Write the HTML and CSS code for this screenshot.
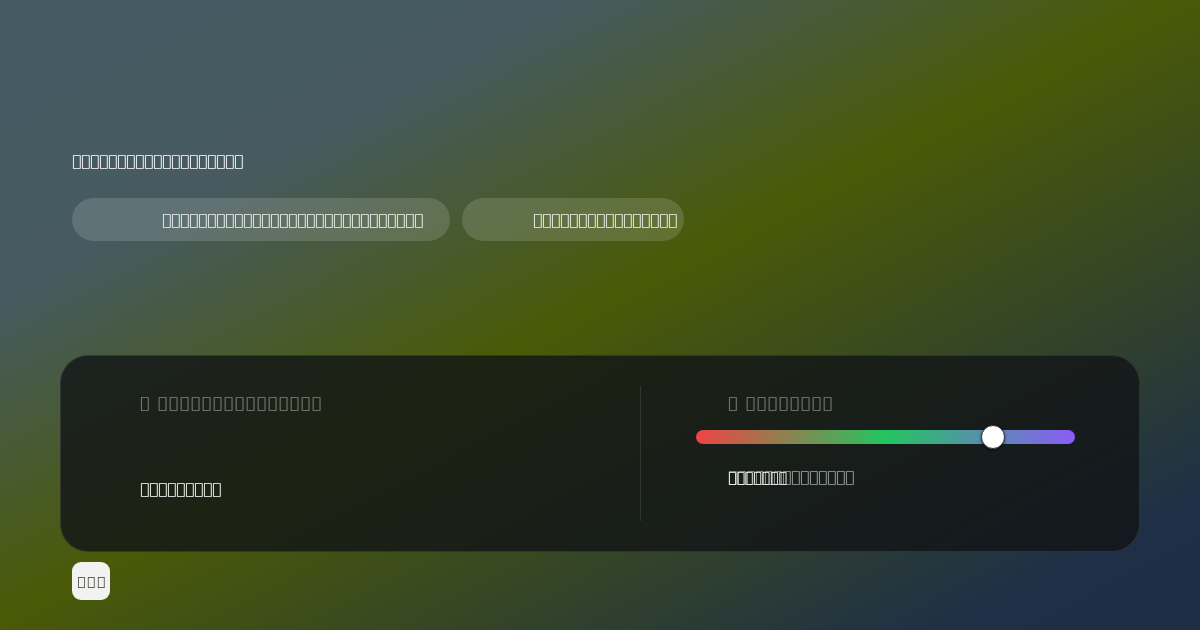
FILE: index.html
```html
<!DOCTYPE html>
<html>
<head>
    <meta charset="UTF-8">
    <meta name="viewport" content="width=device-width, initial-scale=1.0">
    <title>&#x100000;&#x100001;&#x100002;</title>
    <link rel="stylesheet" href="styles.css">
</head>
<body>
    <main class="page">
        <section class="intro">
            <p class="intro-title">&#x100010;&#x100011;&#x100012;&#x100013;&#x100014;&#x100015;&#x100016;&#x100017;&#x100018;&#x100019;&#x10001A;&#x10001B;&#x10001C;&#x10001D;&#x10001E;&#x10001F;&#x100020;&#x100021;&#x100022;</p>
            <div class="chips">
                <span class="chip chip-wide">&#x100030;&#x100031;&#x100032;&#x100033;&#x100034;&#x100035;&#x100036;&#x100037;&#x100038;&#x100039;&#x10003A;&#x10003B;&#x10003C;&#x10003D;&#x10003E;&#x10003F;&#x100040;&#x100041;&#x100042;&#x100043;&#x100044;&#x100045;&#x100046;&#x100047;&#x100048;&#x100049;&#x10004A;&#x10004B;&#x10004C;</span>
                <span class="chip chip-narrow">&#x100050;&#x100051;&#x100052;&#x100053;&#x100054;&#x100055;&#x100056;&#x100057;&#x100058;&#x100059;&#x10005A;&#x10005B;&#x10005C;&#x10005D;&#x10005E;&#x10005F;</span>
            </div>
        </section>

        <section class="card">
            <div class="col col-left">
                <p class="col-label">&#x100060; &#x100061;&#x100062;&#x100063;&#x100064;&#x100065;&#x100066;&#x100067;&#x100068;&#x100069;&#x10006A;&#x10006B;&#x10006C;&#x10006D;&#x10006E;&#x10006F;</p>
                <p class="col-value">&#x100070;&#x100071;&#x100072;&#x100073;&#x100074;&#x100075;&#x100076;&#x100077;&#x100078;</p>
            </div>
            <div class="divider"></div>
            <div class="col col-right">
                <p class="col-label">&#x100080; &#x100081;&#x100082;&#x100083;&#x100084;&#x100085;&#x100086;&#x100087;&#x100088;</p>
                <div class="slider">
                    <div class="slider-track"></div>
                    <div class="slider-thumb" style="left: 78.4%"></div>
                </div>
                <div class="slider-caption">
                    <span class="caption-hint">&#x100090;&#x100091;&#x100092;&#x100093;&#x100094;&#x100095;&#x100096;&#x100097;&#x100098;&#x100099;&#x10009A;&#x10009B;&#x10009C;&#x10009D;</span>
                    <span class="caption-value">&#x1000A0;&#x1000A1;&#x1000A2;&#x1000A3;&#x1000A4;&#x1000A5;&#x1000A6;</span>
                </div>
            </div>
        </section>

        <button class="corner-btn">&#x1000B0;&#x1000B1;&#x1000B2;</button>
    </main>
</body>
</html>
```
FILE: styles.css
```css
* {
    margin: 0;
    padding: 0;
    box-sizing: border-box;
}

html, body {
    width: 1200px;
    height: 630px;
    overflow: hidden;
}

body {
    font-family: "DejaVu Sans", sans-serif;
    font-size: 15px;
    line-height: 18px;
    color: #fff;
    background: linear-gradient(to bottom right, #465a65 0%, #465a60 24%, #4a5a07 49%, #1f3046 89%, #1e2f45 100%);
}

.page {
    padding: 0 60px;
    height: 630px;
    will-change: transform;
}

.intro {
    padding: 152px 12px 0;
}

.intro-title {
    color: #fff;
}

.chips {
    display: flex;
    gap: 12px;
    margin-top: 28px;
}

.chip {
    height: 43px;
    display: flex;
    align-items: center;
    justify-content: center;
    padding-left: 63px;
    border-radius: 22px;
    background-color: rgba(255, 255, 255, 0.14);
    color: rgba(255, 255, 255, 0.92);
}

.chip-wide {
    width: 378px;
}

.chip-narrow {
    width: 222px;
    padding-left: 64px;
}

.card {
    margin-top: 114px;
    height: 197px;
    padding: 30px 0;
    display: grid;
    grid-template-columns: 579px 1px 1fr;
    border: 1px solid rgba(255, 255, 255, 0.1);
    border-radius: 28px;
    background-color: rgba(18, 20, 22, 0.8);
}

.divider {
    background-color: rgba(255, 255, 255, 0.1);
}

.col-left {
    padding-left: 79px;
}

.col-right {
    padding: 0 64px 0 55px;
}

.col-label {
    margin-top: 8px;
    letter-spacing: 2px;
    color: rgba(255, 255, 255, 0.45);
}

.col-right .col-label,
.slider-caption {
    padding-left: 32px;
}

.col-value {
    margin-top: 68px;
    color: #fff;
}

.slider {
    position: relative;
    margin-top: 18px;
}

.slider-track {
    height: 14px;
    border-radius: 7px;
    background: linear-gradient(90deg, #ef4444, #22c55e, #8b5cf6);
}

.slider-thumb {
    position: absolute;
    top: -5px;
    width: 24px;
    height: 24px;
    margin-left: -12px;
    border-radius: 50%;
    background-color: #fff;
    border: 1.5px solid #2f3236;
    box-shadow: 0 1px 3px rgba(0, 0, 0, 0.6);
}

.slider-caption {
    display: grid;
    margin-top: 24px;
}

.slider-caption span {
    grid-area: 1 / 1;
}

.caption-hint {
    color: rgba(255, 255, 255, 0.6);
}

.caption-value {
    font-size: 14px;
    font-weight: bold;
    color: #fff;
}

.corner-btn {
    display: block;
    width: 38px;
    height: 38px;
    margin: 10px 0 0 12px;
    border: none;
    border-radius: 9px;
    background-color: #f2f2f0;
    color: #3a3a3a;
    font-family: "DejaVu Sans", sans-serif;
    font-size: 13px;
    letter-spacing: 2px;
    text-indent: 2px;
}
```
